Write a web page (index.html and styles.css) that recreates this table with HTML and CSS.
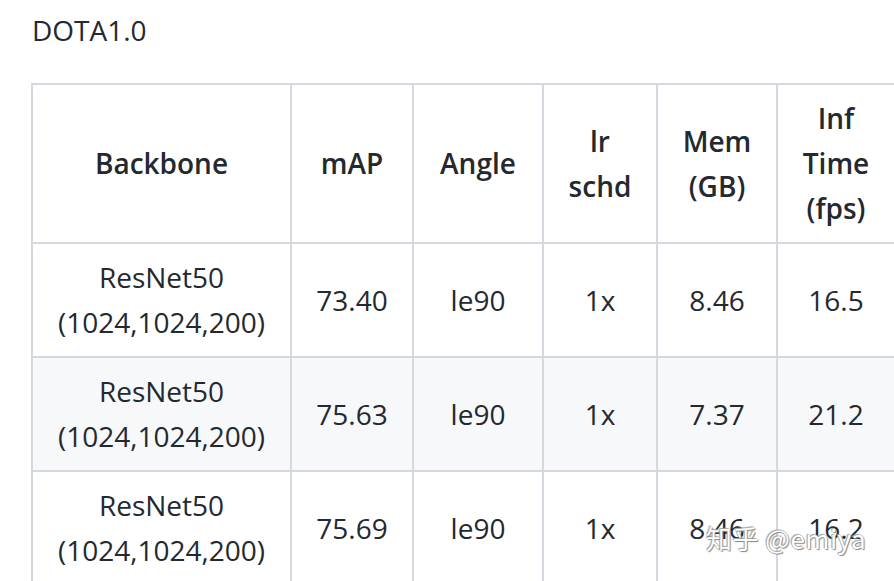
FILE: index.html
```html
<!DOCTYPE html>
<html>
<head>
<meta charset="utf-8">
<link rel="stylesheet" href="styles.css">
</head>
<body>
<div class="page">
  <p class="title">DOTA1.0</p>
  <table class="results">
    <colgroup>
      <col class="c-backbone">
      <col class="c-map">
      <col class="c-angle">
      <col class="c-lr">
      <col class="c-mem">
      <col class="c-inf">
    </colgroup>
    <thead>
      <tr>
        <th>Backbone</th>
        <th>mAP</th>
        <th>Angle</th>
        <th>lr<br>schd</th>
        <th>Mem<br>(GB)</th>
        <th>Inf<br>Time<br>(fps)</th>
      </tr>
    </thead>
    <tbody>
      <tr>
        <td>ResNet50<br>(1024,1024,200)</td>
        <td>73.40</td>
        <td>le90</td>
        <td>1x</td>
        <td>8.46</td>
        <td>16.5</td>
      </tr>
      <tr>
        <td>ResNet50<br>(1024,1024,200)</td>
        <td>75.63</td>
        <td>le90</td>
        <td>1x</td>
        <td>7.37</td>
        <td>21.2</td>
      </tr>
      <tr>
        <td>ResNet50<br>(1024,1024,200)</td>
        <td>75.69</td>
        <td>le90</td>
        <td>1x</td>
        <td>8.46</td>
        <td>16.2</td>
      </tr>
    </tbody>
  </table>
  <div class="watermark">知乎 @emiya</div>
</div>
</body>
</html>
```
FILE: styles.css
```css
html, body {
  margin: 0;
  padding: 0;
  background: #ffffff;
  overflow: hidden;
}
.page {
  position: relative;
  width: 894px;
  height: 581px;
  overflow: hidden;
  padding: 8px 0 0 31px;
  box-sizing: border-box;
  font-family: "Open Sans", "Noto Sans", "Noto Sans CJK SC", sans-serif;
  font-size: 28px;
  line-height: 45px;
  color: #24292f;
}
.title {
  margin: 0 0 30px 1px;
}
.results {
  border-collapse: collapse;
  table-layout: fixed;
  width: 863px;
}
.c-backbone { width: 259px; }
.c-map { width: 122px; }
.c-angle { width: 130px; }
.c-lr { width: 114px; }
.c-mem { width: 120px; }
.c-inf { width: 118px; }
.results th,
.results td {
  border: 2px solid #d5d9df;
  padding: 11px 20px;
  text-align: center;
  vertical-align: middle;
  white-space: nowrap;
}
.results th {
  font-weight: 600;
}
.results tbody tr:nth-child(2) {
  background: #f6f8fa;
}
.watermark {
  position: absolute;
  left: 706px;
  top: 519px;
  font-size: 26px;
  line-height: 38px;
  color: #ffffff;
  letter-spacing: 0.5px;
  text-shadow: 0 0 1px #777, 1px 1px 1px #888, -1px -1px 1px #aaa;
  font-family: "Noto Sans CJK SC", "Open Sans", sans-serif;
}
```
